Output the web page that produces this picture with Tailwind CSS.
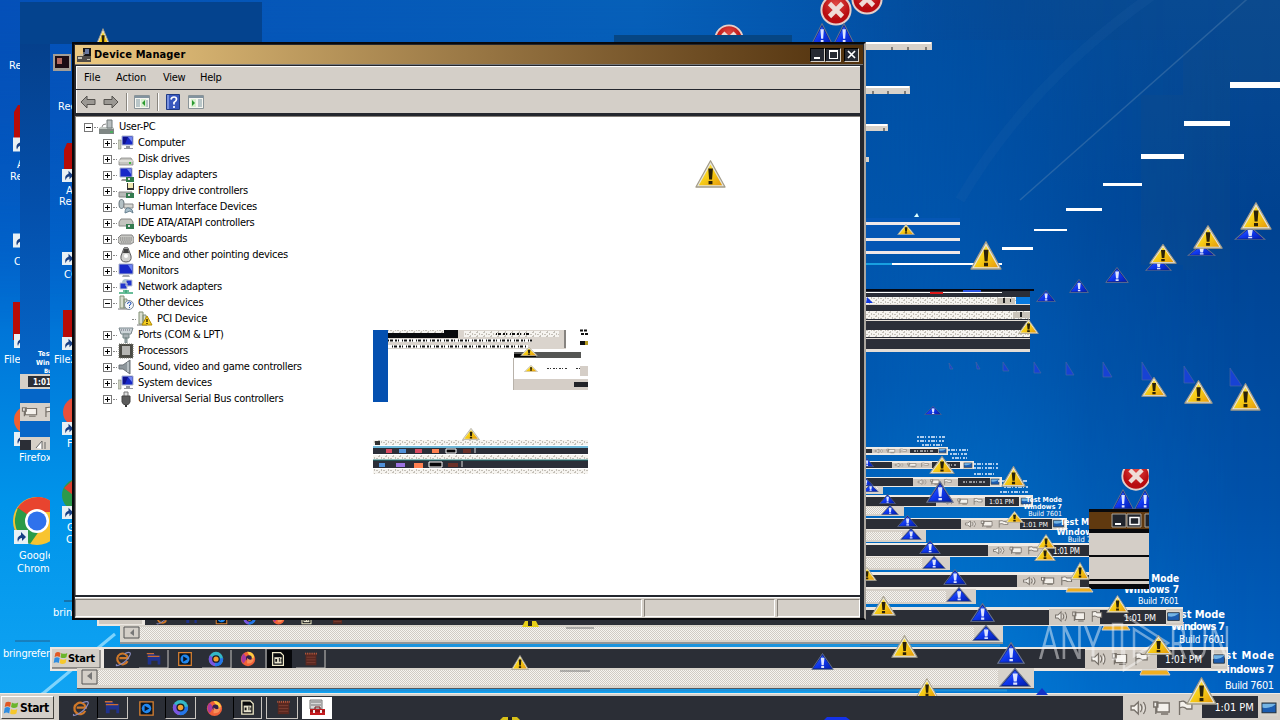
<!DOCTYPE html>
<html lang="en">
<head>
<meta charset="utf-8">
<title>Device Manager</title>
<script src="https://cdn.jsdelivr.net/npm/@tailwindcss/browser@4"></script>
</head>
<body class="w-[1280px] h-[720px] overflow-hidden relative bg-[#0058b8] font-['DejaVu_Sans_Condensed','DejaVu_Sans',sans-serif] text-[11px] text-black">

<!-- Desktop canvas: wallpaper and window trails -->
<svg class="absolute inset-0 w-[1280px] h-[720px]" viewBox="0 0 1280 720">
<defs>
 <linearGradient id="sky" x2="0" y2="1"><stop stop-color="#0650b8"/><stop offset=".35" stop-color="#0068d0"/><stop offset=".7" stop-color="#0094ea"/><stop offset="1" stop-color="#12a6f4"/></linearGradient>
 <linearGradient id="skyR" x2="0" y2="1"><stop stop-color="#084a92"/><stop offset=".3" stop-color="#004290"/><stop offset=".7" stop-color="#0050a8"/><stop offset="1" stop-color="#0062c4"/></linearGradient>
 <linearGradient id="fadeR"><stop offset=".64" stop-color="#fff" stop-opacity="0"/><stop offset=".85" stop-color="#fff" stop-opacity=".9"/><stop offset="1" stop-color="#fff"/></linearGradient>
 <mask id="mR"><rect width="1280" height="720" fill="url(#fadeR)"/></mask>
 <linearGradient id="top"><stop offset="0" stop-color="#0450b8"/><stop offset=".5" stop-color="#0660b8"/><stop offset=".8" stop-color="#004a9c"/><stop offset="1" stop-color="#104a88"/></linearGradient>
 <linearGradient id="fadeB" x2="0" y2="1"><stop stop-color="#fff"/><stop offset="1" stop-color="#fff" stop-opacity="0"/></linearGradient>
 <mask id="mT"><rect width="1280" height="330" fill="url(#fadeB)"/></mask>
 <linearGradient id="mid" x2="0" y2="1"><stop stop-color="#0050a4"/><stop offset=".5" stop-color="#0058b0"/><stop offset="1" stop-color="#0078d4"/></linearGradient>
 <linearGradient id="fm"><stop stop-color="#fff"/><stop offset="1" stop-color="#fff" stop-opacity="0"/></linearGradient>
 <mask id="mM"><rect x="860" y="40" width="380" height="680" fill="url(#fm)"/></mask>
 <linearGradient id="strip" x2="0" y2="1"><stop stop-color="#05408c"/><stop offset=".5" stop-color="#0450ac"/><stop offset="1" stop-color="#0566c8"/></linearGradient>
 <linearGradient id="yel" x2="1" y2="1"><stop stop-color="#ffe94a"/><stop offset=".5" stop-color="#f6cc16"/><stop offset="1" stop-color="#e69a0c"/></linearGradient>
 <linearGradient id="blu" x2="1" y2="1"><stop stop-color="#4a78ff"/><stop offset=".5" stop-color="#1038f0"/><stop offset="1" stop-color="#0420b0"/></linearGradient>
 <radialGradient id="rd" cy=".3"><stop stop-color="#e04a44"/><stop offset="1" stop-color="#b80c10"/></radialGradient>
 <pattern id="chk" width="2" height="2" patternUnits="userSpaceOnUse"><rect width="2" height="2" fill="#f6f4f0"/><rect width="1" height="1" fill="#d0cbc4"/><rect x="1" y="1" width="1" height="1" fill="#d0cbc4"/></pattern>
 <pattern id="noise" width="7" height="4" patternUnits="userSpaceOnUse"><rect width="7" height="4" fill="#f6f4f0"/><path d="M0 0h2v1H0zM3 1h1v2H3zM5 2h2v1H5zM1 3h1v1H1z" fill="#c4c0b8"/></pattern>
 <symbol id="w" viewBox="0 0 32 28" preserveAspectRatio="none"><path d="M16 .8 31 27H1z" fill="#e9e6da" stroke="#a39c88" stroke-width="1.3" stroke-linejoin="round"/><path d="M16 4.500 28 25.300H4z" fill="url(#yel)"/><path d="M13.700 8.500h4.800l-.9 11h-3zM14 21h4v3.300h-4z" fill="#2a2108"/></symbol>
 <symbol id="b" viewBox="0 0 32 28" preserveAspectRatio="none"><path d="M16 .8 31 27H1z" fill="#0a2490" stroke="#6a748c" stroke-width="1.3"/><path d="M16 4 28.6 25H3.4z" fill="url(#blu)"/><path d="M13.700 8h5l-1 12h-3zM14.2 21.5h4v3h-4z" fill="#dde4ff"/></symbol>
 <symbol id="r" viewBox="0 0 32 32"><circle cx="16" cy="16" r="14.6" fill="url(#rd)" stroke="#e4cfca" stroke-width="2"/><path d="M9.500 9.500 22.500 22.500M22.500 9.500 9.500 22.500" stroke="#efdcd6" stroke-width="4.600"/></symbol>
 <symbol id="tray" viewBox="0 0 64 20" preserveAspectRatio="none"><path d="M2 8h3l4-4v12l-4-4H2zM11 6q3 4 0 8M14 4q4 6 0 12M27 5h12v9H27zM31 16h7M24 4h4v5h-4zM26 9v7M49 3v14M49 4q5-2 6 1h6v6h-5q-3-3-7-1" fill="#f4f1ec" stroke="#77716a" stroke-width="1.3"/></symbol>
 <symbol id="mon" viewBox="0 0 18 14" preserveAspectRatio="none"><path d="M0 0h18v14H0z" fill="#d8d4cc"/><path d="M2 2h14v9H2z" fill="#1b5cb0" stroke="#23303c"/><path d="M2.5 6Q9 8 15.500 3v-.5h-13z" fill="#74b4e4"/></symbol>
 <symbol id="ie" viewBox="0 0 20 20"><path d="M15 12.500A6 6 0 1 1 15.500 9H6" fill="none" stroke="#d07828" stroke-width="2.400"/><path d="M3 16Q1 19 8 15.500T18 5Q19 1 12 4" fill="none" stroke="#8a8cc0" stroke-width="1.300"/></symbol>
 <symbol id="ex" viewBox="0 0 20 20"><path d="M3 4h7l2 2h5v10h-3v-4H7v4H3z" fill="#20328c"/><path d="M2 4h8M3 7h13" stroke="#cc6c30" stroke-width="1.500"/></symbol>
 <symbol id="wm" viewBox="0 0 20 20"><path d="M3 3h14v14H3z" fill="#0c1520" stroke="#d88030" stroke-width="1.400"/><circle cx="10" cy="10" r="5" fill="#2088f0"/><path d="M8 7v6l5-3z" fill="#071428"/></symbol>
 <symbol id="gc" viewBox="0 0 20 20"><circle cx="10" cy="10" r="8" fill="#34b8c8"/><path d="M10 10 3 6A8 8 0 0 0 9 18z" fill="#7b55e0"/><path d="M10 10 9 18A8 8 0 0 0 18 9z" fill="#2474e8"/><circle cx="10" cy="10" r="4.300" fill="#1a1d24"/><circle cx="10" cy="10" r="2.900" fill="#f4a030"/></symbol>
 <symbol id="ff" viewBox="0 0 20 20"><circle cx="10" cy="10" r="8" fill="#f06038"/><path d="M5 4Q0 10 5 15L9 9z" fill="#a838a0"/><path d="M9 2q7 0 8 6l-3 2z" fill="#ffcc40"/><circle cx="11" cy="9" r="3.200" fill="#30204c"/><path d="M9 9q4 4 8-1-1 8-8 7z" fill="#f89058"/></symbol>
 <symbol id="cm" viewBox="0 0 20 20"><path d="M4 3h9l3 3v11H4z" fill="#08090c" stroke="#eee8c8" stroke-width="1.400"/><path d="M6 8h8v7H6z" fill="#e6e2cc"/><path d="M7 10h2v3H7zM11 9h1v4h-1zM13 10h1v3h-1z" fill="#111"/></symbol>
 <symbol id="ch" viewBox="0 0 20 20"><path d="M4 4h12v13H4z" fill="#5a2820"/><path d="M4 3v2M6 3v2M8 3v2M10 3v2M12 3v2M14 3v2M16 3v2" stroke="#c86040"/><path d="M5 8h10M5 11h10M5 14h10" stroke="#7c4034"/></symbol>
 <symbol id="sc" viewBox="0 0 14 14"><path d="M0 0h14v14H0z" fill="#e8f0f4"/><path d="M4 12Q2 7 7 5V2l5 5-4 4V8Q5 8 4 12z" fill="#173f84"/></symbol>
 <symbol id="flag" viewBox="0 0 20 20"><path d="M4 4q3-2 6 0L9 9Q6 7 3 9z" fill="#e25822"/><path d="M11 4q3 2 7 0l-1 5q-4 2-7 0z" fill="#6bb52c"/><path d="M3 10q3-2 6 0l-1 6q-3-2-6 0z" fill="#2f8de0"/><path d="M10 11q3 2 7 0l-1 5q-4 2-7 0z" fill="#f6c82c"/></symbol>
 <clipPath id="c0"><rect width="20" height="720"/></clipPath>
 <clipPath id="c1"><rect x="50" width="22" height="720"/></clipPath>
 <clipPath id="c2"><rect width="50" height="720"/></clipPath>
 <clipPath id="c3"><rect x="20" width="30" height="720"/></clipPath>
 <clipPath id="cr"><path d="M1089 469h60v120h-60z"/></clipPath>
 <clipPath id="cr2"><path d="M700 0h60v35h-60z"/></clipPath>
 <clipPath id="cl"><path d="M866 340h300v380H866z"/></clipPath>
</defs>

<rect width="1280" height="720" fill="url(#sky)"/>
<rect width="1280" height="330" fill="url(#top)" mask="url(#mT)"/>
<rect width="1280" height="720" fill="url(#skyR)" mask="url(#mR)"/>
<rect x="860" y="40" width="380" height="680" fill="url(#mid)" mask="url(#mM)"/>
<path d="M20 2h242v42H20z" fill="#04438e"/>
<path d="M20 44h30v332H20z" fill="url(#strip)"/>
<path d="M20 376h30v74H20z" fill="#0566c8"/>
<path d="M614 35h178v8H614z" fill="#064684"/>
<path d="M1280-30 1020 200" stroke="#5c88b4" stroke-width="1.500" opacity=".4"/>
<path d="M1160-10Q1030 80 960 200" stroke="#3a78b0" stroke-width="10" fill="none" opacity=".1"/>
<path d="M1183 50h47v220h-47zM1141 95h42v170h-42zM1230 0h50v82h-50z" fill="#1a5080" opacity=".18"/>
<path d="M1230 82h50v6h-50zM1184 121h46v5h-46zM1141 154h43v5h-43zM1103 183h39v3h-39zM1066 208h36v3h-36zM1034 229h33v2h-33zM1002 247h31v3h-31z" fill="#fff"/>
<path d="M40 696 115 634M0 720 45 692" stroke="#9be0ff" stroke-width="3" opacity=".8"/>

<!-- desktop labels on the left -->
<g fill="#fff" font-size="11">
 <g clip-path="url(#c0)"><text x="9" y="69">Recycle</text><text x="17" y="168">Acrobat</text><text x="10" y="180">Reader</text><text x="14" y="265">CC</text>
  <path d="M14 112l4-7h3v45h-7zM13 302h8v38h-8z" fill="#b80c08"/><use href="#sc" x="13" y="137" width="14" height="15"/><use href="#sc" x="13" y="233" width="14" height="15"/><use href="#sc" x="14" y="334" width="14" height="14"/><circle cx="28" cy="420" r="14" fill="#f06030"/><use href="#sc" x="14" y="432" width="14" height="14"/><text x="4" y="363">FileZilla</text></g>
 <g clip-path="url(#c1)"><text x="58" y="110">Recycle</text><text x="66" y="194">Acrobat</text><text x="59" y="205">Reader</text><text x="64" y="278">CC</text>
  <path d="M64 150l3-7h6v30h-9zM63 310h10v28H63z" fill="#b80c08"/><use href="#sc" x="62" y="169" width="13" height="13"/><use href="#sc" x="62" y="252" width="13" height="13"/><use href="#sc" x="62" y="337" width="13" height="13"/><circle cx="78" cy="412" r="15" fill="#e8503c"/><use href="#sc" x="62" y="422" width="13" height="13"/><text x="54" y="363">FileZilla</text><text x="67" y="447">Firefox</text>
  <circle cx="78" cy="495" r="16" fill="#2c9a4c"/><path d="M64 488l9-8v15z" fill="#dd4030"/><use href="#sc" x="62" y="506" width="13" height="13"/><text x="67" y="531">Google</text><text x="66" y="543">Chrome</text><text x="53" y="616">bringrefer</text><path d="M64 601h9" stroke="#244a68"/></g>
 <g clip-path="url(#c2)"><text x="19" y="461">Firefox</text><circle cx="37" cy="521" r="24" fill="#f8c430"/><path d="M37 521 17 509A24 24 0 0 1 60 512H37z" fill="#e8442f"/><path d="M37 521 18 508Q8 530 30 544l12-17z" fill="#2b9b48"/><circle cx="37" cy="521" r="12" fill="#fff"/><circle cx="37" cy="521" r="9.500" fill="#2f72ec"/><use href="#sc" x="14" y="530" width="14" height="14"/><text x="19" y="559">Google</text><text x="17" y="572">Chrome</text><path d="M15 641h36" stroke="#24608c"/></g>
 <text x="3" y="657" textLength="47">bringrefer</text>
</g>
<path d="M53 54h18v17H53z" fill="#a39d96"/><path d="M55 56h14v12H55z" fill="#1c0c14"/><path d="M57 58h5v6h-5z" fill="#b06860"/>
<!-- smeared tray fragments in the left column -->
<path d="M20 374h30v15H20zM20 403h30v18H20zM20 437h30v13H20z" fill="#d6d0c8"/><path d="M28 376h22v11H28zM20 440h11v10H20z" fill="#2b2e36"/>
<g clip-path="url(#c3)"><use href="#tray" x="0" y="405" width="60" height="14"/></g><path d="M36 448l6-7v8M45 442v7" stroke="#666" fill="#fff"/>
<g fill="#fff" font-weight="bold" clip-path="url(#c3)"><text x="38" y="356" font-size="7">Test</text><text x="36" y="365" font-size="7">Wind</text><text x="44" y="373" font-size="6">Build</text><text x="33" y="385" font-size="8">1:01</text></g>

<use href="#w" x="93" y="28" width="20" height="24"/>
<g clip-path="url(#cr2)"><use href="#r" x="714" y="24" width="30" height="30"/></g>
<use href="#r" x="820" y="-6" width="32" height="32"/><use href="#r" x="851" y="-17" width="32" height="32"/>
<use href="#b" x="811" y="23" width="22" height="22"/><use href="#b" x="833" y="23" width="22" height="22"/>

<!-- window scraps right of the window -->
<path d="M866 42h66v8h-66zM866 86h44v8h-44zM866 124h22v7h-22zM866 157h3v5h-3z" fill="#d8d2ca"/><path d="M866 43h65M866 87h43M866 125h21" stroke="#fff" stroke-width="2"/><path d="M892 47v3M908 47v3M926 47v3M873 91v3M888 91v3M905 91v3M884 128v3" stroke="#222" />
<path d="M866 218h94v36h-94z" fill="#0556b4"/><path d="M866 222h94v3h-94zM866 238h94v3h-94zM866 251h94v3h-94z" fill="#f0e8e8"/><path d="M866 263h136v2H866z" fill="#fff"/><path d="M866 263h26v2H866z" fill="#18a0e0"/><path d="m914 217 3-4 2 4z" fill="#dff"/>
<path d="M866 289h164v62H866z" fill="#2b2e38"/><path d="M866 289h168v2H866z" fill="#050812"/><path d="M866 292h136v1H866z" fill="#fff"/><path d="M963 290h18v2h-18z" fill="#2850e0"/><path d="M930 292h13v2h-13z" fill="#e01818"/><path d="M866 297h150v7H866zM866 311h164v8H866zM866 330h164v7H866z" fill="url(#noise)"/><path d="M1016 297h14v7h-14z" fill="#087ae0"/><path d="M866 304h164v1H866zM866 320h164v1H866zM866 338h164v1H866zM866 349h164v3H866z" fill="#e4ddd6"/><path d="M997 298h18v6h-18zM1013 312h17v6h-17z" fill="#c9c3ba"/><path d="M1003 298h2v5h-2zM1010 299h1v3h-1zM1020 312h2v5h-2z" fill="#222"/><path d="m866 303 1-6 6 6z" fill="#1038e0"/>

<g id="fragments">
 <path d="M866 447h82v8h-82zM866 461h108v8H866zM866 477h136v10H866zM866 495h167v12H866zM866 518h201v12H866zM866 543h223v14H866zM866 572h223v18H866z" fill="#f0ebe5"/>
 <path d="M866 449h6v4h-6zM910 449h28v4h-28zM866 462h26v6h-26zM932 462h28v6h-28zM866 478h47v8h-47zM958 478h32v8h-32zM866 497h70v9h-70zM985 497h34v9h-34zM866 519h95v10h-95zM1020 519h32v10h-32zM866 545h122v11H866zM1045 545h44v11h-44zM866 575h151v12H866zM1080 575h9v12h-9z" fill="#2b2e36"/>
 <path d="M872 449h38v4h-38zM892 463h40v5h-40zM913 479h45v7h-45zM936 498h49v8h-49zM961 520h59v9h-59zM988 546h57v10h-57zM1017 575h63v12h-63z" fill="#cfc8c0"/>
 <use href="#tray" x="874" y="448" width="34" height="6"/><use href="#tray" x="894" y="462" width="36" height="6"/><use href="#tray" x="917" y="478" width="36" height="8"/><use href="#tray" x="942" y="497" width="42" height="9"/><use href="#tray" x="964" y="519" width="46" height="10"/><use href="#tray" x="992" y="545" width="48" height="11"/><use href="#tray" x="1022" y="575" width="52" height="12"/>
 <g stroke="#fff" stroke-dasharray="2 1 1 2 3 1"><path d="M914 451h20M938 465h18M963 482h22"/></g>
 <g fill="#fff"><text x="989" y="504" font-size="7" textLength="25">1:01 PM</text><text x="1022" y="527" font-size="7" textLength="26">1:01 PM</text><text x="1053" y="554" font-size="8" textLength="27">1:01 PM</text></g>
 <use href="#mon" x="938" y="448" width="9" height="6"/><use href="#mon" x="963" y="462" width="10" height="7"/><use href="#mon" x="990" y="478" width="10" height="8"/><use href="#mon" x="1020" y="497" width="12" height="9"/><use href="#mon" x="1052" y="519" width="13" height="10"/>
 <path d="M866 486h17v8h-17zM866 506h38v10h-38zM866 530h60v12h-60zM866 557h84v13h-84zM866 589h110v15H866z" fill="#d6d0c8"/>
 <path d="M866 487h12v5h-12zM866 507h20v7h-20zM866 532h36v8h-36zM866 558h56v10h-56zM866 591h80v11h-80z" fill="url(#chk)"/>
</g>

<!-- build label echoes -->
<g fill="#fff" font-size="11" text-anchor="end">
 <g font-weight="bold">
 <text x="1274" y="659" textLength="62">Test Mode</text><text x="1274" y="673" textLength="58">Windows 7</text><text x="1225" y="618" textLength="56">Test Mode</text><text x="1225" y="630" textLength="54">Windows 7</text>
 <text x="1179" y="582" font-size="10">Test Mode</text><text x="1179" y="593" font-size="10">Windows 7</text><text x="1106" y="525" font-size="9">Test Mode</text><text x="1106" y="535" font-size="9">Windows 7</text><text x="1062" y="502" font-size="7">Test Mode</text><text x="1062" y="509" font-size="7">Windows 7</text></g>
 <text x="1274" y="689" textLength="49">Build 7601</text><text x="1225" y="643" font-size="10" textLength="46">Build 7601</text><text x="1179" y="604" font-size="9" textLength="41">Build 7601</text><text x="1104" y="542" font-size="7.500">Build 7601</text><text x="1062" y="516" font-size="7">Build 7601</text>
</g>
<g stroke="#e4f0ff" stroke-width="1.500" stroke-dasharray="2 1 4 1 1 2"><path d="M917 437h28M917 441h27M922 445h22M948 450h22M950 454h17M952 458h15M974 464h24M974 468h24M974 474h22M998 481h30M1004 487h24M1000 492h28"/></g>

<!-- lower-level taskbars and scroll bars -->
<path d="M97 607h1086v19H97z" fill="#ece7e1"/><path d="M145 610h904v15H145z" fill="#2b2e36"/><path d="M99 617h43v7H99zM1049 609h64v16h-64zM1166 609h17v16h-17z" fill="#cfc9c1"/><path d="M1100 610h66v14h-66z" fill="#2b2e36"/><use href="#tray" x="1054" y="609" width="50" height="15"/><use href="#mon" x="1166" y="611" width="15" height="12"/><text x="1124" y="621" fill="#fff" font-size="9" textLength="32">1:01 PM</text>
<g><use href="#ie" x="155" y="611" width="15" height="15"/><use href="#ex" x="184" y="611" width="15" height="15"/><use href="#wm" x="214" y="611" width="15" height="15"/><use href="#gc" x="242" y="611" width="15" height="15"/><use href="#ff" x="271" y="611" width="15" height="15"/><use href="#cm" x="299" y="611" width="15" height="15"/><use href="#ch" x="330" y="611" width="15" height="15"/></g>
<path d="M120 625h883v19H120z" fill="#d8d3cb"/><path d="M140 627h834v13H140z" fill="url(#chk)"/><path d="M120 643h883" stroke="#4d5864"/><path d="M124 627h15v11h-15z" fill="#d4cfc8" stroke="#555"/><path d="m134 629-4 4 4 3z" fill="#777"/><path d="M566 628h28" stroke="#777"/>
<path d="M50 647h1178v24H50z" fill="#ece7e1"/><path d="M104 649h981v19H104z" fill="#2b2e36"/><path d="M1085 650h72v19h-72zM1211 650h16v19h-16z" fill="#cfc9c1"/><path d="M1157 650h54v18h-54z" fill="#2b2e36"/><use href="#tray" x="1090" y="650" width="60" height="18"/><use href="#mon" x="1212" y="653" width="14" height="13"/><text x="1165" y="663" fill="#fff" font-size="10" textLength="37">1:01 PM</text>
<path d="M52 649h47v19H52z" fill="#d4cfc8"/><path d="M52 668h48v-18" fill="none" stroke="#444"/><use href="#flag" x="52" y="649" width="17" height="18"/><text x="68" y="662" font-size="11" font-weight="bold" textLength="27">Start</text>
<path d="M139 668h29v-18M202 668h29v-18M266 649v20M296 668h29v-18" fill="none" stroke="#c9c5c0"/><path d="M267 650h25v18h-25z" fill="#06070a"/>
<use href="#ie" x="114" y="650" width="18" height="18"/><use href="#ex" x="145" y="650" width="18" height="18"/><use href="#wm" x="176" y="650" width="18" height="18"/><use href="#gc" x="207" y="650" width="18" height="18"/><use href="#ff" x="239" y="650" width="18" height="18"/><use href="#cm" x="269" y="650" width="18" height="18"/><use href="#ch" x="302" y="650" width="18" height="18"/>
<path d="M77 668h957v21H77z" fill="#d8d3cb"/><path d="M98 670h900v15H98z" fill="url(#chk)"/><path d="M77 688.500h957" stroke="#4d5864"/><path d="M82 670h15v14H82z" fill="#d4cfc8" stroke="#555"/><path d="m92 672-5 4 5 4z" fill="#777"/><path d="M560 671h30" stroke="#777"/>
<path d="M77 690.500h930M120 645.500h880" stroke="#2090d8" stroke-width="2"/>

<!-- captured window corner -->
<g clip-path="url(#cr)"><use href="#r" x="1121" y="461" width="30" height="30"/><use href="#b" x="1112" y="489" width="22" height="21"/><use href="#b" x="1134" y="489" width="22" height="21"/><path d="M1089 509h60v80h-60z" fill="#08090c"/><path d="M1089 512h60v17h-60z" fill="#60390f"/><path d="M1089 533h60v22h-60zM1089 557h60v22h-60z" fill="#d4cec7"/><path d="M1089 581h60v3h-60z" fill="#d4cec7"/><path d="M1112 514h14v13h-14zM1127 514h14v13h-14zM1145 514h9v13h-9z" fill="#20242c" stroke="#aaa59c"/><path d="M1115 524h6" stroke="#fff" stroke-width="2"/><path d="M1130 517.500h9v7h-9z" stroke="#fff" stroke-width="1.500" fill="none"/></g>

<!-- cautionary triangle trails -->
<g clip-path="url(#cl)">
<use href="#b" x="860" y="458" width="14" height="9"/><use href="#b" x="858" y="478" width="16" height="8"/><use href="#b" x="862" y="484" width="17" height="8"/><use href="#b" x="879" y="494" width="17" height="10"/><use href="#b" x="881" y="505" width="18" height="10"/><use href="#b" x="897" y="515" width="21" height="12"/><use href="#b" x="900" y="528" width="22" height="12"/><use href="#b" x="919" y="540" width="22" height="14"/><use href="#b" x="922" y="556" width="24" height="13"/><use href="#b" x="943" y="569" width="24" height="16"/><use href="#b" x="946" y="587" width="26" height="15"/>
<use href="#w" x="857" y="567" width="20" height="14"/></g>
<use href="#b" x="970" y="603" width="25" height="19"/><use href="#b" x="972" y="625" width="28" height="16"/><use href="#b" x="997" y="642" width="28" height="22"/><use href="#b" x="999" y="668" width="32" height="19"/><use href="#b" x="926" y="481" width="28" height="22"/><use href="#b" x="924" y="406" width="18" height="9"/><use href="#b" x="811" y="653" width="23" height="17"/>
<use href="#b" x="1036" y="290" width="20" height="12"/><use href="#b" x="1069" y="279" width="20" height="14"/><use href="#b" x="1105" y="267" width="24" height="16"/><use href="#b" x="1145" y="257" width="27" height="14"/><use href="#b" x="1187" y="244" width="29" height="12"/><use href="#b" x="1234" y="226" width="32" height="14"/>
<g fill="#1742d4" stroke="#4264a0" stroke-width=".7"><path d="m949 363 4 6h-3zM976 362l4 7h-3zM1003 362l6 9h-6zM1034 362l7 11h-7zM1066 362l8 13h-8zM1103 362l9 15h-9zM1142 362l11 18h-11zM1184 366l11 17h-11zM1230 368l12 18h-12z"/></g>
<use href="#w" x="897" y="224" width="18" height="11"/><use href="#w" x="970" y="241" width="32" height="29"/><use href="#w" x="1018" y="319" width="21" height="15"/><use href="#w" x="1240" y="202" width="32" height="28"/><use href="#w" x="1193" y="225" width="30" height="24"/><use href="#w" x="1149" y="244" width="28" height="20"/>
<use href="#w" x="1141" y="377" width="26" height="20"/><use href="#w" x="1184" y="380" width="29" height="24"/><use href="#w" x="1230" y="383" width="31" height="28"/><use href="#w" x="929" y="456" width="26" height="18"/><use href="#w" x="1001" y="466" width="25" height="21"/><use href="#w" x="1005" y="511" width="19" height="12"/><use href="#w" x="1036" y="534" width="20" height="15"/><use href="#w" x="1034" y="546" width="22" height="15"/><use href="#w" x="1070" y="562" width="20" height="18"/><use href="#w" x="871" y="596" width="25" height="20"/><use href="#w" x="1106" y="595" width="23" height="18"/><use href="#w" x="891" y="635" width="27" height="23"/>
<path d="m1068 588-2 4h27l-3-4zM1104 626l-2 4h28l-3-4zM1142 670l-2 5h30l-3-5z" fill="#f0ae20" stroke="#ccc"/>
<use href="#w" x="511" y="655" width="18" height="15"/><path d="m522 627 3-6h11l3 6z" fill="#e8d018"/><path d="M528 621h4v5h-4z" fill="#222"/>

<!-- service watermark -->
<g fill="none" stroke="#fff" stroke-width="2.500" opacity=".42"><path d="M1113 624v35h9v-35zM1124 615l44 28-44 27v-20M1134 629l22 14-22 13z"/></g>
<g fill="#fff" opacity=".45" font-family="Open Sans" font-size="46"><text x="1039" y="659" textLength="63" lengthAdjust="spacingAndGlyphs">ANY</text><text x="1169" y="659" textLength="62" lengthAdjust="spacingAndGlyphs">RUN</text></g>
<use href="#w" x="1144" y="635" width="29" height="20"/>
</svg>

<!-- Device Manager window -->
<main class="absolute left-[72px] top-[42px] w-[794px] h-[578px] bg-[#24272e] border-2 border-[#08090c] border-r-[#aaa59e] flex flex-col pr-[4px]">
 <header class="h-[20px] shrink-0 mt-px ml-px -mr-[3px] flex items-center bg-gradient-to-r from-[#edca82] via-[#9a7845] via-50% to-[#50300b] border-b border-[#777]">
  <svg class="w-[17px] h-4 ml-px shrink-0" viewBox="0 0 17 16"><path d="M1 9h14v6H1z" fill="#504c48"/><path d="M2 10h4v2H2zM11 12h3v1h-3z" fill="#c8c4b4"/><path d="M7 1h8v8H7z" fill="#161618"/><path d="M9 2h4v5H9z" fill="#6878a0"/><path d="M4 8h4V5" stroke="#bbb" fill="none"/></svg>
  <h1 class="font-bold text-[11px] tracking-[0.12px] leading-none ml-px">Device Manager</h1>
  <div class="ml-auto mr-[4px] flex h-[14px]">
   <span class="w-[15px] border border-t-black border-l-black border-[#d4cfc8] bg-[#262a33] flex items-end pb-[2px] pl-[3px]"><i class="block w-[6px] h-[2px] bg-white"></i></span>
   <span class="w-[16px] border border-t-black border-l-black border-[#d4cfc8] bg-[#262a33] flex items-center justify-center"><i class="block w-[9px] h-[9px] border border-t-2 border-white"></i></span>
   <span class="w-[15px] ml-[3px] border border-t-black border-l-black border-[#d4cfc8] bg-[#262a33] flex items-center justify-center"><svg class="size-[9px]" viewBox="0 0 9 9"><path d="M1 1l7 7M8 1 1 8" stroke="#fff" stroke-width="1.700"/></svg></span>
  </div>
 </header>
 <nav class="h-[23px] mt-[1px] ml-[2px] shrink-0 border-t border-l border-white bg-[#d4cfc8] flex items-center text-[11px] pl-[7px]">
  <span class="w-[32px]">File</span><span class="w-[47px] tracking-[-0.15px]">Action</span><span class="w-[37px] tracking-[-0.3px]">View</span><span class="tracking-[-0.3px]">Help</span>
 </nav>
 <div class="h-[23px] mt-px ml-[2px] shrink-0 bg-[#d4cfc8] border-l border-white flex items-center pl-[3px] pt-px">
  <svg class="w-[16px] h-[14px]" viewBox="0 0 16 14"><path d="M1 7 7 1v3.500h8v5H7V13z" fill="#9b9893" stroke="#55524e"/></svg>
  <svg class="w-[16px] h-[14px] ml-[7px]" viewBox="0 0 16 14"><path d="M15 7 9 1v3.500H1v5h8V13z" fill="#9b9893" stroke="#55524e"/></svg>
  <i class="w-[2px] h-[18px] ml-[7px] border-l border-[#8a867f] bg-white"></i>
  <svg class="w-4 h-[14px] ml-[6px]" viewBox="0 0 16 14"><path d="M.5.5h15v13H.5z" fill="#f6f6f0" stroke="#8a9498"/><path d="M1 2h14" stroke="#82939f" stroke-width="2"/><path d="M2 5h4M2 7h4M2 9h4M2 11h4M13 5v7" stroke="#7d96a0"/><path d="M7 4h5v8H7z" fill="#d7efcf"/><path d="M11 5v6L8 8z" fill="#2b9a30"/></svg>
  <i class="w-[2px] h-[18px] ml-[7px] border-l border-[#8a867f] bg-white"></i>
  <svg class="w-[14px] h-4 ml-[7px]" viewBox="0 0 14 16"><path d="M.5.5h13v15H.5z" fill="#3857bd" stroke="#203a84"/><path d="M1 1h2v14H1z" fill="#7891df"/><path d="M5 5.500Q5.500 3 8 3t2.500 2.300Q10.500 7 8 8.500v2M8 12v2" fill="none" stroke="#fff" stroke-width="1.700"/></svg>
  <svg class="w-4 h-[14px] ml-[8px]" viewBox="0 0 16 14"><path d="M.5.5h15v13H.5z" fill="#f6f6f0" stroke="#8a9498"/><path d="M1 2h14" stroke="#82939f" stroke-width="2"/><path d="M10 5h4M10 7h4M10 9h4M10 11h4" stroke="#7d96a0"/><path d="M3 4h5v8H3z" fill="#d7efcf"/><path d="M4 5v6l3-3z" fill="#2b9a30"/></svg>
 </div>
 <section class="relative mt-[3px] ml-px flex-1 min-h-0 bg-white border-l border-t border-[#85807a] flex flex-col pt-[2px] leading-4" id="tree">
  <svg width="0" height="0" class="absolute"><defs>
   <symbol id="i-pc" viewBox="0 0 16 16"><path d="M0 9h15v6H0z" fill="#7f8684"/><path d="M1 8h13l1 2H0z" fill="#c2c8c4"/><path d="M8 1h5v8H8z" fill="#b9bfc0" stroke="#707878"/><path d="M11 12h3v2h-3z" fill="#4cae60"/><path d="M3 8q0-3 4-3" stroke="#888" fill="none"/></symbol>
   <symbol id="i-comp" viewBox="0 0 16 16"><path d="M4 1h11v9H4z" fill="#1728c8" stroke="#aab2c8"/><path d="M5 2h5l-3 7H5z" fill="#10128c"/><path d="m10 2h4v5z" fill="#7186f2"/><path d="M0 5h3v9H0z" fill="#c9cdbd" stroke="#858b80" stroke-width=".6"/><path d="M8 11h4v2h3v1H6v-1h2z" fill="#9498a0"/></symbol>
   <symbol id="i-disk" viewBox="0 0 16 16"><path d="m3 7h10l2 3v4H1v-4z" fill="#c5c5c0" stroke="#8a8a88" stroke-width=".8"/><path d="M1 10h14" stroke="#f5f5f0"/><path d="M11 11h2v2h-2z" fill="#40b840"/></symbol>
   <symbol id="i-disp" viewBox="0 0 16 16"><path d="M2 1h12v9H2z" fill="#1728c8" stroke="#aab2c8"/><path d="m9 2h4v5z" fill="#7186f2"/><path d="M4 12h5v2H3z" fill="#999"/><path d="M8 10h8v5H8z" fill="#2e7a48"/><path d="M10 11h2v2h-2z" fill="#ddd"/></symbol>
   <symbol id="i-flop" viewBox="0 0 16 16"><path d="M1 9h13v5H1z" fill="#b8bab8" stroke="#888"/><path d="M9 0h7v7H9z" fill="#333"/><path d="M10 0h5v5h-5z" fill="#f1e8b0"/><path d="M8 10h8v5H8z" fill="#347b50"/><path d="M10 11h2v2h-2z" fill="#ddd"/></symbol>
   <symbol id="i-hid" viewBox="0 0 16 16"><ellipse cx="3.500" cy="5" rx="2.500" ry="4.500" fill="#b4c0c4" stroke="#66737b"/><path d="M6 5h9v4H6z" fill="#d6d6d2" stroke="#888"/><path d="M7 14q0-6 4-5t4 5l-3-2z" fill="#aac0cc" stroke="#668090"/></symbol>
   <symbol id="i-ide" viewBox="0 0 16 16"><path d="m3 4h10l2 3v4H1V7z" fill="#c5c5c0" stroke="#8a8a88"/><path d="M8 9h8v5H8z" fill="#347b50"/><path d="M10 10h2v2h-2z" fill="#ddd"/></symbol>
   <symbol id="i-key" viewBox="0 0 16 16"><path d="M3 4h11l2 3v4l-3 2H2l-2-2V7z" fill="#c8c8c4" stroke="#858585"/><path d="M2 7h12M2 9h12M3 11h10" stroke="#777" stroke-dasharray="1.300 .8"/></symbol>
   <symbol id="i-mouse" viewBox="0 0 16 16"><path d="M6 1q2-2 4 0l3 8q1 6-5 6T3 9z" fill="#d1d1cf" stroke="#5a5a5c"/><path d="M6 2q2-1 4 0l1 4H5z" fill="#444"/><circle cx="8" cy="9" r="2" fill="#fff"/></symbol>
   <symbol id="i-mon" viewBox="0 0 16 16"><path d="M1 1h14v10H1z" fill="#1728c8" stroke="#aab2c8"/><path d="m10 2h4v6z" fill="#6a84f0"/><path d="M5 12h6l1 2H4z" fill="#a4aab0"/></symbol>
   <symbol id="i-net" viewBox="0 0 16 16"><circle cx="8" cy="4" r="4" fill="#a8c2ce"/><path d="M2 4h7v6H2zM8 1h6v6H8z" fill="#2236cc" stroke="#c1c8d4"/><path d="M8 11v3M1 14h14M5 12h6" stroke="#38a878" stroke-width="1.600"/></symbol>
   <symbol id="i-oth" viewBox="0 0 16 16"><path d="M2 1h4v12H2zM6 4h3v9H6z" fill="#d8ddcf" stroke="#829077"/><path d="M0 14h10" stroke="#777"/><circle cx="11" cy="10" r="4.500" fill="#f4f7fa" stroke="#7c8a98"/><path d="M9.500 9q0-2 2-2t1.500 2l-1.500 1v1M11.500 12v1" fill="none" stroke="#2050b8"/></symbol>
   <symbol id="i-pci" viewBox="0 0 16 16"><path d="M2 1h4v12H2zM6 4h3v9H6z" fill="#d8ddcf" stroke="#829077"/><path d="M0 14h10" stroke="#777"/><path d="M10 5l5 9H5z" fill="#f5cf20" stroke="#b08800"/><path d="M10 8v3M10 12v1" stroke="#332200" stroke-width="1.400"/></symbol>
   <symbol id="i-port" viewBox="0 0 16 16"><path d="M1 1h14l-2 6H3z" fill="#ccd4d8" stroke="#7b878d"/><path d="M3 3h10" stroke="#667" stroke-dasharray="1 1"/><path d="M5 7h6v4H5zM7 11h2v5H7z" fill="#a8b0b4" stroke="#788"/></symbol>
   <symbol id="i-cpu" viewBox="0 0 16 16"><path d="M1 1h14v14H1z" fill="#4b4b45" stroke="#77776d" stroke-dasharray="1 1"/><path d="M4 3h8v9H4z" fill="#b5b5b2"/></symbol>
   <symbol id="i-snd" viewBox="0 0 16 16"><path d="M1 6h4l7-5v14l-7-5H1z" fill="#8e979c" stroke="#6c7378"/><path d="M10 3v10" stroke="#c4ccd0" stroke-width="1.500"/></symbol>
   <symbol id="i-usb" viewBox="0 0 16 16"><path d="M6 1h4v5H6z" fill="#ddd" stroke="#777"/><path d="M4 5h8v6q-1 3-4 3t-4-3z" fill="#5b5b5b" stroke="#444"/><path d="M8 14v2" stroke="#333" stroke-width="2"/></symbol>
  </defs></svg>
 </section>
 <footer class="h-[21px] mt-[2px] shrink-0 ml-px bg-[#d4cfc8] border-t border-white flex gap-[2px] pt-px pb-px">
  <span class="flex-1 border border-[#86817a] border-b-white border-r-white"></span><span class="w-[131px] border border-[#86817a] border-b-white border-r-white"></span><span class="w-[83px] border border-[#86817a] border-b-white border-r-white"></span>
 </footer>
</main>

<!-- trails painted over the window's client area -->
<svg class="absolute left-[373px] top-[160px] w-[360px] h-[320px]" viewBox="373 160 360 320">
 <use href="#w" x="695" y="160" width="31" height="28"/>
 <path d="M373 330h15v72h-15z" fill="#0450b0"/>
 <path d="M388 330h178v19H388z" fill="#dad4cd"/><path d="M388 330h70v8h-70z" fill="#090a0d"/><path d="M388 330h56v3h-56zM464 331h95v6h-95z" fill="url(#noise)"/><path d="M388 339h144v3H388zM388 345h140v3H388z" fill="#fff"/><path d="M388 340.500h144M392 346.500h134M496 334h33" stroke="#111" stroke-width="2" stroke-dasharray="1 1 3 2 2 1 1 3"/><path d="M565 330v18" stroke="#333"/>
 <path d="M580 330.500h8M581 334h7" stroke="#111" stroke-width="2" stroke-dasharray="3 1"/><path d="M580 341h5v4h-5z" fill="#111"/><path d="M585 341h3v4h-3z" fill="#b59b20"/>
 <path d="M514 352h67v6h-67z" fill="#555654"/><path d="M514 354h22v3h-22z" fill="#050505"/><path d="M513 358h1v32h-1z" fill="#b8b2aa"/><path d="M514 379h74v11h-74zM580 366h8v10h-8z" fill="#d5cec7"/><path d="M574 382h14v5h-14z" fill="#222429"/><path d="M547 368.500h20M576 368.500h5" stroke="#333" stroke-dasharray="2 1 1 2"/>
 <use href="#w" x="520" y="347" width="18" height="9"/><use href="#w" x="524" y="365" width="14" height="7"/><use href="#w" x="462" y="428" width="18" height="12"/>
 <path d="M373 440h215v5H373zM373 455h215v4H373zM373 469h215v5H373z" fill="url(#noise)"/><path d="M375 441h5v4h-5z" fill="#333"/>
 <path d="M373 447h215v7H373zM373 460h215v8H373z" fill="#2b2e38"/><path d="M373 446h215v2H373z" fill="#70b8d8"/><path d="M373 459.500h215v1H373z" fill="#207a78"/>
 <g><path d="M386 449h6v4h-6zM415 449h7v4h-7z" fill="#d84a60"/><path d="M399 449h7v4h-7zM379 463h6v4h-6z" fill="#5090d8"/><path d="M432 449h7v4h-7zM414 463h9v5h-9z" fill="#ff8050"/><path d="M446 449h10v4h-10zM429 462h13v5h-13z" fill="#07070a" stroke="#fff"/><path d="M463 449h8v4h-8zM448 463h10v4h-10z" fill="#6a3028"/><path d="M396 463h9v4h-9z" fill="#9a72e0"/><path d="M475 448v5M462 461v6" stroke="#ddd"/></g>
</svg>

<!-- Main taskbar -->
<div class="absolute left-0 top-[693px] w-[1280px] h-[27px] bg-[#d4cfc8] border-t border-[#eeeae4] flex items-stretch pt-[2px]">
 <button class="w-[53px] ml-px mb-px border border-white border-r-[#44423e] border-b-[#44423e] flex items-center font-bold text-[12px]"><svg class="size-[18px] shrink-0"><use href="#flag" width="18" height="18"/></svg><span class="tracking-[-0.4px]">Start</span></button>
 <div class="ml-[5px] flex-1 bg-[#2b2e36] flex items-center" id="tasks">
  <span class="w-[38px] h-[22px] flex items-center justify-center pl-1"><svg class="size-[19px]"><use href="#ie" width="19" height="19"/></svg></span>
  <span class="w-[31px] h-[22px] flex items-center justify-center border-r border-b border-[#c9c5c0] border-l border-l-black"><svg class="size-[19px]"><use href="#ex" width="19" height="19"/></svg></span>
  <span class="w-[37px] h-[22px] flex items-center justify-center"><svg class="size-[19px]"><use href="#wm" width="19" height="19"/></svg></span>
  <span class="w-[31px] h-[22px] flex items-center justify-center border-r border-b border-[#c9c5c0] border-l border-l-black"><svg class="size-[19px]"><use href="#gc" width="19" height="19"/></svg></span>
  <span class="w-[37px] h-[22px] flex items-center justify-center"><svg class="size-[19px]"><use href="#ff" width="19" height="19"/></svg></span>
  <span class="w-[29px] h-[22px] flex items-center justify-center border-r border-b border-[#c9c5c0] border-l border-l-black"><svg class="size-[19px]"><use href="#cm" width="19" height="19"/></svg></span>
  <span class="w-[32px] h-[22px] ml-[4px] flex items-center justify-center border-x border-b border-[#c9c5c0] pl-[3px]"><svg class="size-[19px]"><use href="#ch" width="19" height="19"/></svg></span>
  <span class="w-[30px] h-[22px] ml-[4px] bg-white flex items-center justify-center"><svg class="size-[18px]" viewBox="0 0 18 18"><path d="M2 1h12v9H2z" fill="#d8d8d8" stroke="#777"/><path d="M3 3h10M3 6h10" stroke="#777"/><path d="M2 10h15v6H2z" fill="#c41c20"/><path d="M7 10V8h5v2M2 12h15" fill="none" stroke="#701010"/><path d="M5 11h2v3H5zM12 11h2v3h-2z" fill="#eee"/></svg></span>
 </div>
 <div class="w-[79px] flex items-center pl-[6px]"><svg class="w-[66px] h-[20px]"><use href="#tray" width="66" height="20"/></svg></div>
 <div class="w-[56px] mb-[2px] bg-[#2b2e36] text-white text-[11px] flex items-center justify-center"><span class="pl-2 pt-0.5 tracking-[-0.1px] whitespace-nowrap">1:01 PM</span></div>
 <div class="w-[22px] flex items-center justify-center"><svg class="w-[18px] h-[15px]"><use href="#mon" width="18" height="15"/></svg></div>
</div>
<svg class="absolute left-0 top-[676px] w-[1280px] h-[44px]" viewBox="0 676 1280 44">
 <use href="#w" x="1186" y="677" width="31" height="28"/><svg x="915" y="678" width="24" height="18" viewBox="0 0 24 18"><use href="#w" width="24" height="21"/></svg><path d="m1036 695 6-7 6 7z" fill="#1432c8"/><path d="M824 720l3-3h19l4 3z" fill="#1432e8"/><path d="M500 720l3-3h14l3 3z" fill="#d8c018"/><path d="M508 717h4v3h-4z" fill="#222"/>
</svg>

<template id="row"><div class="h-4 flex items-center shrink-0"><i class="size-[9px] shrink-0 border border-[#777] bg-white flex items-center justify-center"><svg class="size-[7px]" viewBox="0 0 7 7"><path stroke="#000" d="M1 3.500h5M3.500 1v5"/></svg></i><b class="w-[4px] mx-px border-t border-dotted border-[#888]"></b><svg class="size-4 shrink-0" viewBox="0 0 16 16"><use width="16" height="16"/></svg><span class="ml-[4px] whitespace-nowrap tracking-[-0.28px]"></span></div></template>
<script>
const rows = [["User-PC","pc",8],["Computer","comp",27],["Disk drives","disk",27],["Display adapters","disp",27],["Floppy drive controllers","flop",27],["Human Interface Devices","hid",27],["IDE ATA/ATAPI controllers","ide",27],["Keyboards","key",27],["Mice and other pointing devices","mouse",27],["Monitors","mon",27],["Network adapters","net",27],["Other devices","oth",27],["PCI Device","pci",46],["Ports (COM & LPT)","port",27],["Processors","cpu",27],["Sound, video and game controllers","snd",27],["System devices","comp",27],["Universal Serial Bus controllers","usb",27]];
const tree = document.getElementById('tree'), tpl = document.getElementById('row');
rows.forEach(([name, icon, indent]) => {
  const r = tpl.content.cloneNode(true), d = r.firstElementChild;
  d.style.paddingLeft = indent + 'px';
  d.querySelector('use').setAttribute('href', '#i-' + icon);
  d.querySelector('span').textContent = name;
  if (icon === 'pc' || icon === 'oth') d.querySelector('path').setAttribute('d', 'M1 3.500h5');
  if (icon === 'pci') d.querySelector('i').style.visibility = 'hidden';
  tree.append(r);
});
</script>
</body>
</html>
